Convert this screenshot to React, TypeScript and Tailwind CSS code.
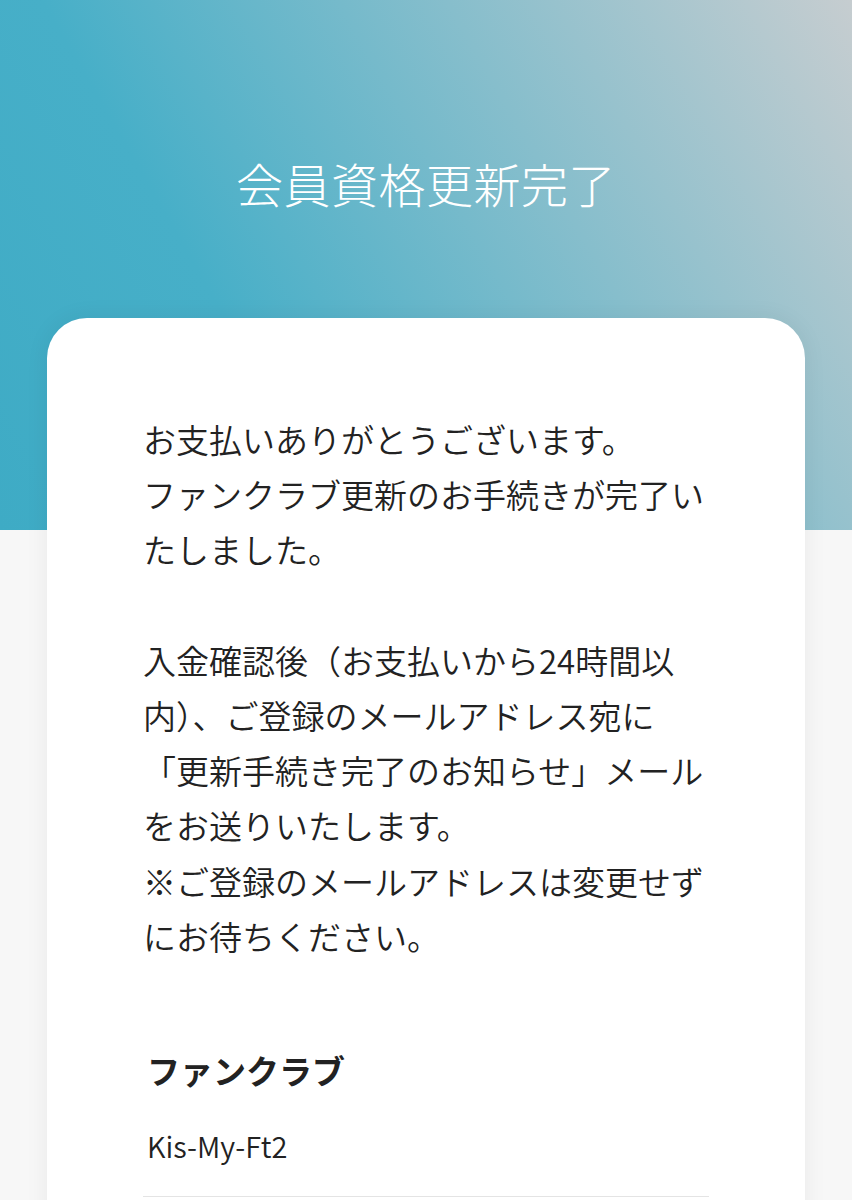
import React from 'react';

const jp = 'font-["Noto_Sans_CJK_JP","Noto_Sans",sans-serif]';

export default function App() {
  return (
    <div className={`min-h-screen bg-[#f7f7f7] ${jp} text-[#222]`}>
      <div className="h-[530px] bg-[linear-gradient(60deg,#3eabc5_0%,#47afc8_30%,#c6cdd0_100%)] pt-[148px]">
        <h1 className="text-center text-[47px] leading-[69px] font-light tracking-[0.5px] text-white">
          会員資格更新完了
        </h1>
      </div>

      <div className="relative mx-[47px] -mt-[212px] rounded-t-[40px] bg-white px-[96px] pt-[94px] pb-[60px] shadow-[0_0_24px_rgba(0,0,0,0.06)]">
        <p className="text-[33px] leading-[55.2px] font-[350]">
          お支払いありがとうございます。
          <br />
          ファンクラブ更新のお手続きが完了いたしました。
          <br />
          <br />
          入金確認後（お支払いから24時間以内）、ご登録のメールアドレス宛に「更新手続き完了のお知らせ」メールをお送りいたします。
          <br />
          ※ご登録のメールアドレスは変更せずにお待ちください。
        </p>

        <div className="mt-[82px]">
          <h2 className="pl-[4px] text-[33px] leading-[48px] font-bold">ファンクラブ</h2>
          <div className="mt-[30px] pl-[4px] text-[29px] leading-[42px] font-[350]">Kis-My-Ft2</div>
          <div className="mt-[30px] h-px bg-[#e4e4e4]" />
          <div className="h-[60px]" />
        </div>
      </div>
    </div>
  );
}
